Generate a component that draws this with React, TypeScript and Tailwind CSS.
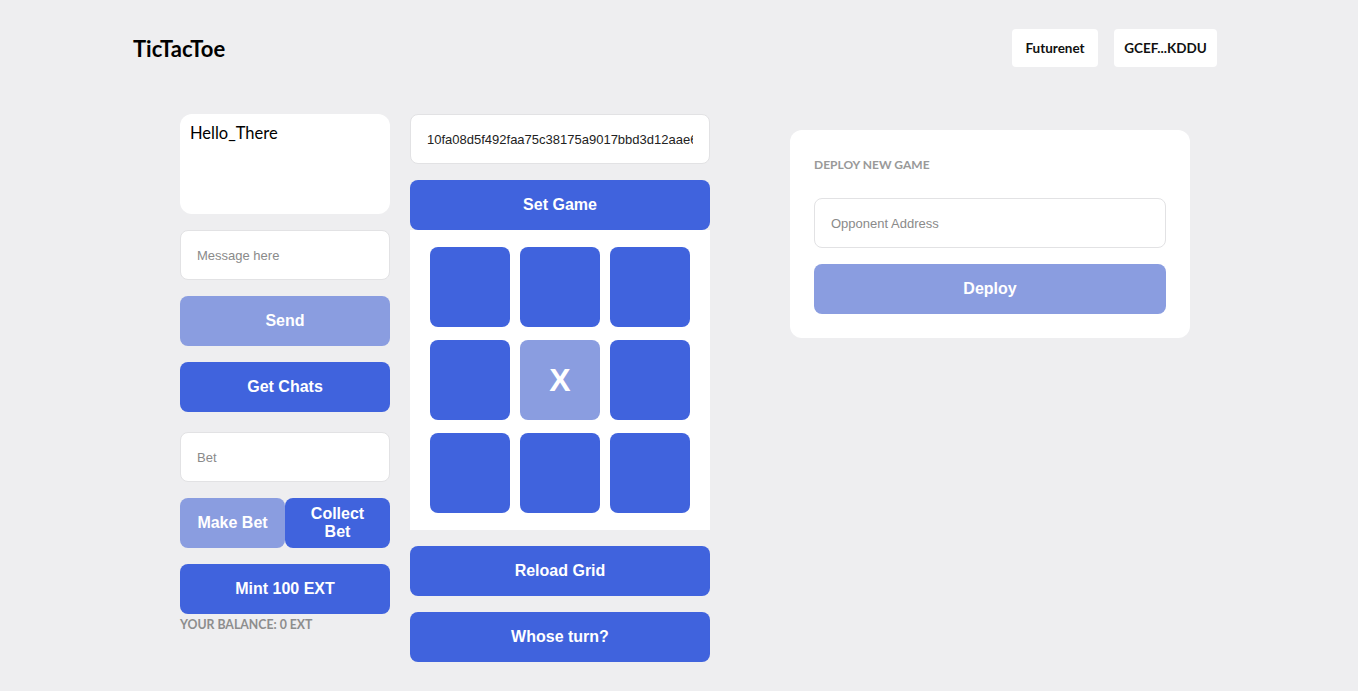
import React, { useState } from 'react';

const BLUE = 'bg-[#4063dd]';

const GameBoard: React.FC<{ cells: string[] }> = ({ cells }) => (
  <div className="bg-white px-5 py-[17px] grid grid-cols-3 gap-x-[10px] gap-y-[13px]">
    {cells.map((c, i) => (
      <div
        key={i}
        className={`h-20 rounded-lg flex items-center justify-center text-white text-[32px] font-bold ${
          c ? 'bg-[#8a9de0]' : BLUE
        }`}
      >
        {c}
      </div>
    ))}
  </div>
);

const App: React.FC = () => {
  const [cells] = useState<string[]>(['', '', '', '', 'X', '', '', '', '']);
  const ui = { fontFamily: 'Lato, "Noto Sans", sans-serif' };
  const arial = { fontFamily: '"Liberation Sans", Arial, sans-serif' };

  const btn = 'h-[50px] w-full rounded-lg text-white text-base font-bold flex items-center justify-center';
  const input =
    'h-[50px] w-full rounded-lg bg-white border border-[#e2e2e4] px-4 text-[13px] text-[#222] placeholder:text-[#8a8a8a] outline-none';

  return (
    <div className="min-h-[691px] w-full bg-[#eeeef0]" style={arial}>
      {/* Header */}
      <div className="flex items-center justify-between pl-[133px] pr-[141px] pt-[29px]">
        <h1 className="text-[22px] font-bold text-black" style={ui}>
          TicTacToe
        </h1>
        <div className="flex gap-4" style={ui}>
          <button className="h-[38px] w-[86px] bg-white rounded text-[13.5px] font-bold text-[#111]">Futurenet</button>
          <button className="h-[38px] w-[103px] bg-white rounded text-[13.5px] font-bold text-[#111]">GCEF...KDDU</button>
        </div>
      </div>

      <div className="flex pl-[180px] pt-[47px]">
        {/* Left: chat + bets */}
        <div className="w-[210px] flex flex-col">
          <div className="h-[100px] rounded-xl bg-white px-[10px] py-[7px] text-[16.5px] text-black" style={ui}>
            Hello_There
          </div>
          <input className={`${input} mt-4`} placeholder="Message here" style={arial} />
          <button className={`${btn} bg-[#8a9de0] mt-4`}>Send</button>
          <button className={`${btn} ${BLUE} mt-4`}>Get Chats</button>
          <input className={`${input} mt-5`} placeholder="Bet" style={arial} />
          <div className="flex mt-4">
            <button className={`${btn} bg-[#8a9de0] w-[105px]`}>Make Bet</button>
            <button className={`${btn} ${BLUE} w-[105px] leading-[18px]`}>
              Collect
              <br />
              Bet
            </button>
          </div>
          <button className={`${btn} ${BLUE} mt-4`}>Mint 100 EXT</button>
          <p className="text-[12.3px] font-bold text-[#8d8d8d] mt-[2px]" style={ui}>
            YOUR BALANCE: 0 EXT
          </p>
        </div>

        {/* Middle: game */}
        <div className="w-[300px] ml-5 flex flex-col">
          <input
            className={`${input} text-[13px] text-[#111]`}
            defaultValue="10fa08d5f492faa75c38175a9017bbd3d12aae6d3b0f2ad2f6d1d07e1a1a31"
            style={arial}
          />
          <button className={`${btn} ${BLUE} mt-4`}>Set Game</button>
          <GameBoard cells={cells} />
          <button className={`${btn} ${BLUE} mt-4`}>Reload Grid</button>
          <button className={`${btn} ${BLUE} mt-4`}>Whose turn?</button>
        </div>

        {/* Right: deploy */}
        <div className="ml-20 mt-4 w-[400px] h-[208px] rounded-xl bg-white px-6 pt-[27px]">
          <p className="text-xs font-bold text-[#999]" style={ui}>
            DEPLOY NEW GAME
          </p>
          <input className={`${input} mt-[25px]`} placeholder="Opponent Address" style={arial} />
          <button className={`${btn} bg-[#8a9de0] mt-4`}>Deploy</button>
        </div>
      </div>
    </div>
  );
};

export default App;
